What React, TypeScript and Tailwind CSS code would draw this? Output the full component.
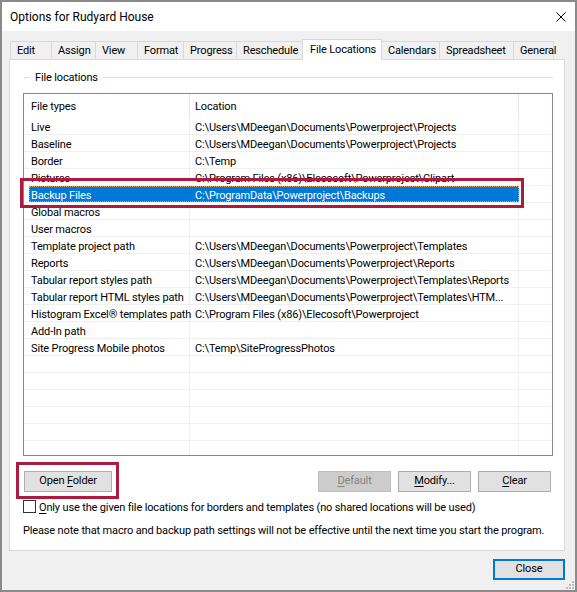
import React from 'react';

const tabs = [
  { label: 'Edit', w: 'w-[41px]' },
  { label: 'Assign', w: 'w-[44px]' },
  { label: 'View', w: 'w-[42px]' },
  { label: 'Format', w: 'w-[46px]' },
  { label: 'Progress', w: 'w-[53px]' },
  { label: 'Reschedule', w: 'w-[66px]' },
  { label: 'File Locations', w: 'w-[80px]', active: true },
  { label: 'Calendars', w: 'w-[57px]' },
  { label: 'Spreadsheet', w: 'w-[74px]' },
  { label: 'General', w: 'w-[41px]' },
];

const rows: [string, string][] = [
  ['Live', 'C:\\Users\\MDeegan\\Documents\\Powerproject\\Projects'],
  ['Baseline', 'C:\\Users\\MDeegan\\Documents\\Powerproject\\Projects'],
  ['Border', 'C:\\Temp'],
  ['Pictures', 'C:\\Program Files (x86)\\Elecosoft\\Powerproject\\Clipart'],
  ['Backup Files', 'C:\\ProgramData\\Powerproject\\Backups'],
  ['Global macros', ''],
  ['User macros', ''],
  ['Template project path', 'C:\\Users\\MDeegan\\Documents\\Powerproject\\Templates'],
  ['Reports', 'C:\\Users\\MDeegan\\Documents\\Powerproject\\Reports'],
  ['Tabular report styles path', 'C:\\Users\\MDeegan\\Documents\\Powerproject\\Templates\\Reports'],
  ['Tabular report HTML styles path', 'C:\\Users\\MDeegan\\Documents\\Powerproject\\Templates\\HTM...'],
  ['Histogram Excel® templates path', 'C:\\Program Files (x86)\\Elecosoft\\Powerproject'],
  ['Add-In path', ''],
  ['Site Progress Mobile photos', 'C:\\Temp\\SiteProgressPhotos'],
  ['', ''],
  ['', ''],
  ['', ''],
  ['', ''],
  ['', ''],
  ['', ''],
];

const SELECTED = 4;

const Button = ({ children, w = 'w-[73px]', disabled = false }: { children: React.ReactNode; w?: string; disabled?: boolean }) => (
  <div
    className={`${w} h-[21px] flex items-center justify-center border ${
      disabled ? 'bg-[#cccccc] border-[#bfbfbf] text-[#838383]' : 'bg-[#e1e1e1] border-[#adadad] text-black'
    }`}
  >
    <span className="whitespace-pre">{children}</span>
  </div>
);

export default function App() {
  return (
    <div className="relative w-[577px] h-[592px] border-2 border-[#8a8a8a] bg-[#f0f0f0] text-[11px] tracking-[-0.15px] text-black font-['Roboto',sans-serif] flex flex-col overflow-hidden">
      {/* title bar */}
      <div className="h-[29px] bg-white flex items-center justify-between pl-[8px] pr-[9px]">
        <span className="text-[12px] tracking-normal">Options for Rudyard House</span>
        <svg width="10" height="10" viewBox="0 0 10 10">
          <path d="M0.5 0.5 L9.5 9.5 M9.5 0.5 L0.5 9.5" stroke="#000" strokeWidth="1" />
        </svg>
      </div>

      {/* body */}
      <div className="relative flex-1 flex flex-col">
        {/* tabs */}
        <div className="relative z-10 mt-[10px] ml-[8px] h-[18px] flex items-end">
          {tabs.map((t, i) =>
            t.active ? (
              <div key={t.label} className={`${t.w} h-[21px] -mb-px bg-white border-x border-t border-[#d9d9d9] pl-[7px] pt-[1px] leading-[17px] whitespace-nowrap`}>
                {t.label}
              </div>
            ) : (
              <div
                key={t.label}
                className={`${t.w} h-[18px] bg-[#f0f0f0] border-t border-[#d9d9d9] pl-[6px] leading-[18px] whitespace-nowrap ${
                  tabs[i - 1]?.active ? '' : 'border-l'
                } ${i === tabs.length - 1 ? 'border-r' : ''}`}
              >
                {t.label}
              </div>
            )
          )}
        </div>

        {/* panel */}
        <div className="ml-[7px] w-[556px] h-[492px] bg-white border border-[#d9d9d9] flex flex-col">
          {/* group header */}
          <div className="mt-[10px] ml-[14px] mr-[11px] h-[14px] flex items-center">
            <div className="w-[6px] h-px bg-[#dcdcdc]" />
            <span className="px-[5px] pt-[1px] leading-[14px]">File locations</span>
            <div className="flex-1 h-px bg-[#dcdcdc]" />
          </div>

          {/* list view */}
          <div className="mt-[9px] ml-[13px] w-[530px] h-[363px] border border-[#828790] overflow-hidden">
            <div className="h-[24px] flex leading-[15px]">
              <div className="w-[166px] h-full border-r border-[#e5e5e5] pl-[7px] pt-[5px]">File types</div>
              <div className="w-[329px] h-full border-r border-[#e5e5e5] pl-[5px] pt-[5px]">Location</div>
              <div className="flex-1" />
            </div>
            {rows.map(([type, loc], i) =>
              i === SELECTED ? (
                <div key={i} className="h-[17px] flex border-b border-[#f0f0f0]">
                  <div className="w-[5px]" />
                  <div className="w-[490px] h-[16px] bg-[#0078d7] text-white border border-dotted border-[#e0a860] flex pt-[2px] leading-[13px]">
                    <div className="w-[160px] pl-[1px] whitespace-nowrap">{type}</div>
                    <div className="pl-[5px] whitespace-nowrap">{loc}</div>
                  </div>
                  <div className="flex-1 border-l border-[#f0f0f0]" />
                </div>
              ) : (
                <div key={i} className="h-[17px] flex border-b border-[#f0f0f0] leading-[15px]">
                  <div className="w-[166px] border-r border-[#f0f0f0] pl-[7px] pt-[2px] whitespace-nowrap">{type}</div>
                  <div className="w-[329px] border-r border-[#f0f0f0] pl-[5px] pt-[2px] whitespace-nowrap overflow-hidden">{loc}</div>
                  <div className="flex-1" />
                </div>
              )
            )}
          </div>

          {/* buttons */}
          <div className="mt-[15px] ml-[14px] mr-[13px] flex items-center">
            <Button w="w-[88px]">
              Open <u className="underline-offset-2">F</u>older
            </Button>
            <div className="flex-1" />
            <div className="flex gap-[7px]">
              <Button disabled>
                <u className="underline-offset-2">D</u>efault
              </Button>
              <Button>
                <u className="underline-offset-2">M</u>odify...
              </Button>
              <Button>
                <u className="underline-offset-2">C</u>lear
              </Button>
            </div>
          </div>

          {/* checkbox */}
          <div className="mt-[8px] ml-[13px] h-[13px] flex items-center gap-[3px]">
            <div className="w-[13px] h-[13px] border border-[#333] bg-white" />
            <span className="leading-[13px] pt-[1px]">
              <u className="underline-offset-2">O</u>nly use the given file locations for borders and templates (no shared locations will be used)
            </span>
          </div>

          {/* note */}
          <div className="mt-[11px] ml-[13px] leading-[14px]">
            Please note that macro and backup path settings will not be effective until the next time you start the program.
          </div>
        </div>

        {/* footer */}
        <div className="mt-[8px] pr-[10px] flex justify-end">
          <div className="w-[72px] h-[21px] bg-[#e1e1e1] border-2 border-[#0078d7] flex items-center justify-center">Close</div>
        </div>

        {/* resize grip */}
        <svg className="absolute right-[1px] bottom-[1px]" width="9" height="9" viewBox="0 0 9 9">
          <g fill="#bcbcbc">
            <rect x="7" y="1" width="2" height="2" />
            <rect x="4" y="4" width="2" height="2" />
            <rect x="7" y="4" width="2" height="2" />
            <rect x="1" y="7" width="2" height="2" />
            <rect x="4" y="7" width="2" height="2" />
            <rect x="7" y="7" width="2" height="2" />
          </g>
        </svg>
      </div>

      {/* annotation boxes */}
      <div className="absolute left-[18px] top-[176px] w-[504px] h-[30px] border-[3px] border-[#ad1a3e] pointer-events-none" />
      <div className="absolute left-[14px] top-[460px] w-[103px] h-[37px] border-[3px] border-[#ad1a3e] pointer-events-none" />
    </div>
  );
}
